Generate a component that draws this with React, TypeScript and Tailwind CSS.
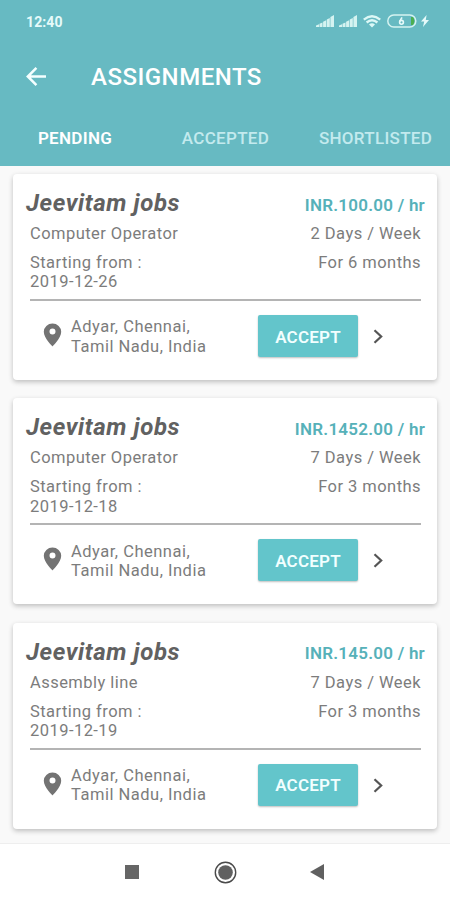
type Job = {
  role: string;
  rate: string;
  days: string;
  months: string;
  date: string;
};

const jobs: Job[] = [
  { role: "Computer Operator", rate: "INR.100.00 / hr", days: "2 Days / Week", months: "For 6 months", date: "2019-12-26" },
  { role: "Computer Operator", rate: "INR.1452.00 / hr", days: "7 Days / Week", months: "For 3 months", date: "2019-12-18" },
  { role: "Assembly line", rate: "INR.145.00 / hr", days: "7 Days / Week", months: "For 3 months", date: "2019-12-19" },
];

function Signal() {
  return (
    <svg width="19" height="12" viewBox="0 0 19 12" fill="#d5f3f1">
      <path d="M0 12V10.5L3 9.3V12ZM3.5 12V8.8L6.5 7.6V12ZM7.1 12V6.8L10.2 5.3V12ZM10.8 12V4.6L13.8 3V12ZM14.4 12V2L18 0V12Z" />
    </svg>
  );
}

function StatusBar() {
  return (
    <div className="flex h-[42px] items-center justify-between pl-[26px] pr-[21px]">
      <span className="mt-[1px] text-[14px] font-bold leading-none tracking-[0.1px] text-[#e6fafa]">12:40</span>
      <div className="flex items-center">
        <Signal />
        <span className="w-[4px]" />
        <Signal />
        <svg className="ml-[5px]" width="18" height="13" viewBox="0 0 18 13" fill="none" stroke="#dcf8f6" strokeWidth="2.3">
          <path d="M0.8 4.6Q9 -2.2 17.2 4.6M3.6 7.5Q9 3 14.4 7.5" />
          <path d="M6 9.4Q9 7 12 9.4L9 12.6Z" fill="#dcf8f6" stroke="none" />
        </svg>
        <svg className="ml-[6px]" width="30" height="14" viewBox="0 0 30 14">
          <path d="M24 3H26.2Q28.4 7 26.2 11H24Z" fill="#4caf50" />
          <rect x="0.8" y="1" width="28" height="12" rx="6" fill="none" stroke="#d5f3f1" strokeWidth="1.5" />
          <path d="M15 3.3L12.7 7.3" fill="none" stroke="#e6fafa" strokeWidth="1.6" />
          <circle cx="14.5" cy="8.3" r="1.9" fill="none" stroke="#e6fafa" strokeWidth="1.6" />
        </svg>
        <svg className="ml-[4px]" width="8" height="12" viewBox="0 0 8 12" fill="#e6fafa">
          <path d="M5.6 0L0 6.6H3.2L2 12L8 5H4.8Z" />
        </svg>
      </div>
    </div>
  );
}

function Header() {
  return (
    <header className="h-[165.5px] shrink-0 bg-[#67bac2] text-white">
      <StatusBar />
      <div className="flex h-[68px] items-center pl-[26px]">
        <svg width="20" height="19" viewBox="0 0 20 19" fill="none" stroke="#f4ffff" strokeWidth="2.5">
          <path d="M20 9.5H2M10.4 0.9L1.8 9.5L10.4 18.1" />
        </svg>
        <h1 className="ml-[45px] mt-[1px] text-[24px] font-medium leading-none tracking-[0.5px]">ASSIGNMENTS</h1>
      </div>
      <nav className="flex h-[56px] items-center text-[17px] font-medium leading-none tracking-[0.3px] text-[#c3eaee]">
        <span className="w-[150px] text-center font-semibold text-white">PENDING</span>
        <span className="w-[151px] text-center">ACCEPTED</span>
        <span className="w-[149px] text-center">SHORTLISTED</span>
      </nav>
    </header>
  );
}

function JobCard({ job }: { job: Job }) {
  return (
    <article className="h-[206px] rounded-[4px] bg-white pt-[13px] text-[16.5px] leading-[19.5px] tracking-[0.45px] text-[#7c7c7c] shadow-[0_2px_5px_rgba(0,0,0,0.24)]">
      <div className="flex h-[32px] items-center justify-between pl-[13px] pr-[12px]">
        <h2 className="text-[24px] font-bold italic leading-[30px] tracking-[0.58px] text-[#616161]">Jeevitam jobs</h2>
        <span className="mt-[5px] text-[17px] font-semibold tracking-[0.25px] text-[#56b1b9]">{job.rate}</span>
      </div>
      <div className="ml-[17px] mr-[16px] mt-[5px] flex justify-between">
        <span>{job.role}</span>
        <span>{job.days}</span>
      </div>
      <div className="ml-[17px] mr-[16px] mt-[9.5px] flex h-[48px] justify-between border-b-[2px] border-[#b4b4b4]">
        <span>Starting from :<br />{job.date}</span>
        <span>{job.months}</span>
      </div>
      <div className="mt-[13px] flex h-[44px] items-center pl-[30px]">
        <svg className="mb-[2px] shrink-0" width="19" height="24" viewBox="0 0 19 24" fill="#737373">
          <path fillRule="evenodd" d="M9.5 0.5A8.7 8.3 0 0 0 0.8 8.8C0.8 15 9.5 23.5 9.5 23.5S18.2 15 18.2 8.8A8.7 8.3 0 0 0 9.5 0.5ZM9.5 5.6A3 3 0 1 1 9.5 11.6A3 3 0 0 1 9.5 5.6Z" />
        </svg>
        <p className="ml-[9px] mt-[1.5px] w-[187px] leading-[19.5px] tracking-[0.5px]">Adyar, Chennai,<br />Tamil Nadu, India</p>
        <button className="h-[42px] w-[100px] rounded-[2px] bg-[#63c5cb] pt-[3px] text-[17px] font-semibold tracking-[0.2px] text-[#f2ffff] shadow-[0_1px_2px_rgba(0,0,0,0.25)]">ACCEPT</button>
        <svg className="ml-[15px] mt-[1px]" width="11" height="15" viewBox="0 0 11 15" fill="none" stroke="#555555" strokeWidth="2.2">
          <path d="M1.5 1.2L8.2 7.5L1.5 13.8" />
        </svg>
      </div>
    </article>
  );
}

function NavigationBar() {
  return (
    <footer className="flex h-[57px] items-center border-t border-[#eeeeee] bg-white pl-[125px]">
      <span className="h-[14px] w-[14px] bg-[#666666]" />
      <svg className="ml-[75px]" width="23" height="23" viewBox="0 0 23 23">
        <circle cx="11.5" cy="11.5" r="10.2" fill="none" stroke="#4a4a4a" strokeWidth="1.4" />
        <circle cx="11.5" cy="11.5" r="7.3" fill="#606060" />
      </svg>
      <svg className="ml-[73px]" width="14" height="16" viewBox="0 0 14 16" fill="#606060">
        <path d="M14 0V16L0 8Z" />
      </svg>
    </footer>
  );
}

export default function App() {
  return (
    <div className="flex h-[900px] w-[450px] flex-col overflow-hidden bg-[#f9f9f9] font-['Roboto',sans-serif]">
      <Header />
      <main className="flex flex-1 flex-col gap-[18.4px] px-[13px] pt-[8.4px]">
        {jobs.map((job) => (
          <JobCard key={job.date} job={job} />
        ))}
      </main>
      <NavigationBar />
    </div>
  );
}
